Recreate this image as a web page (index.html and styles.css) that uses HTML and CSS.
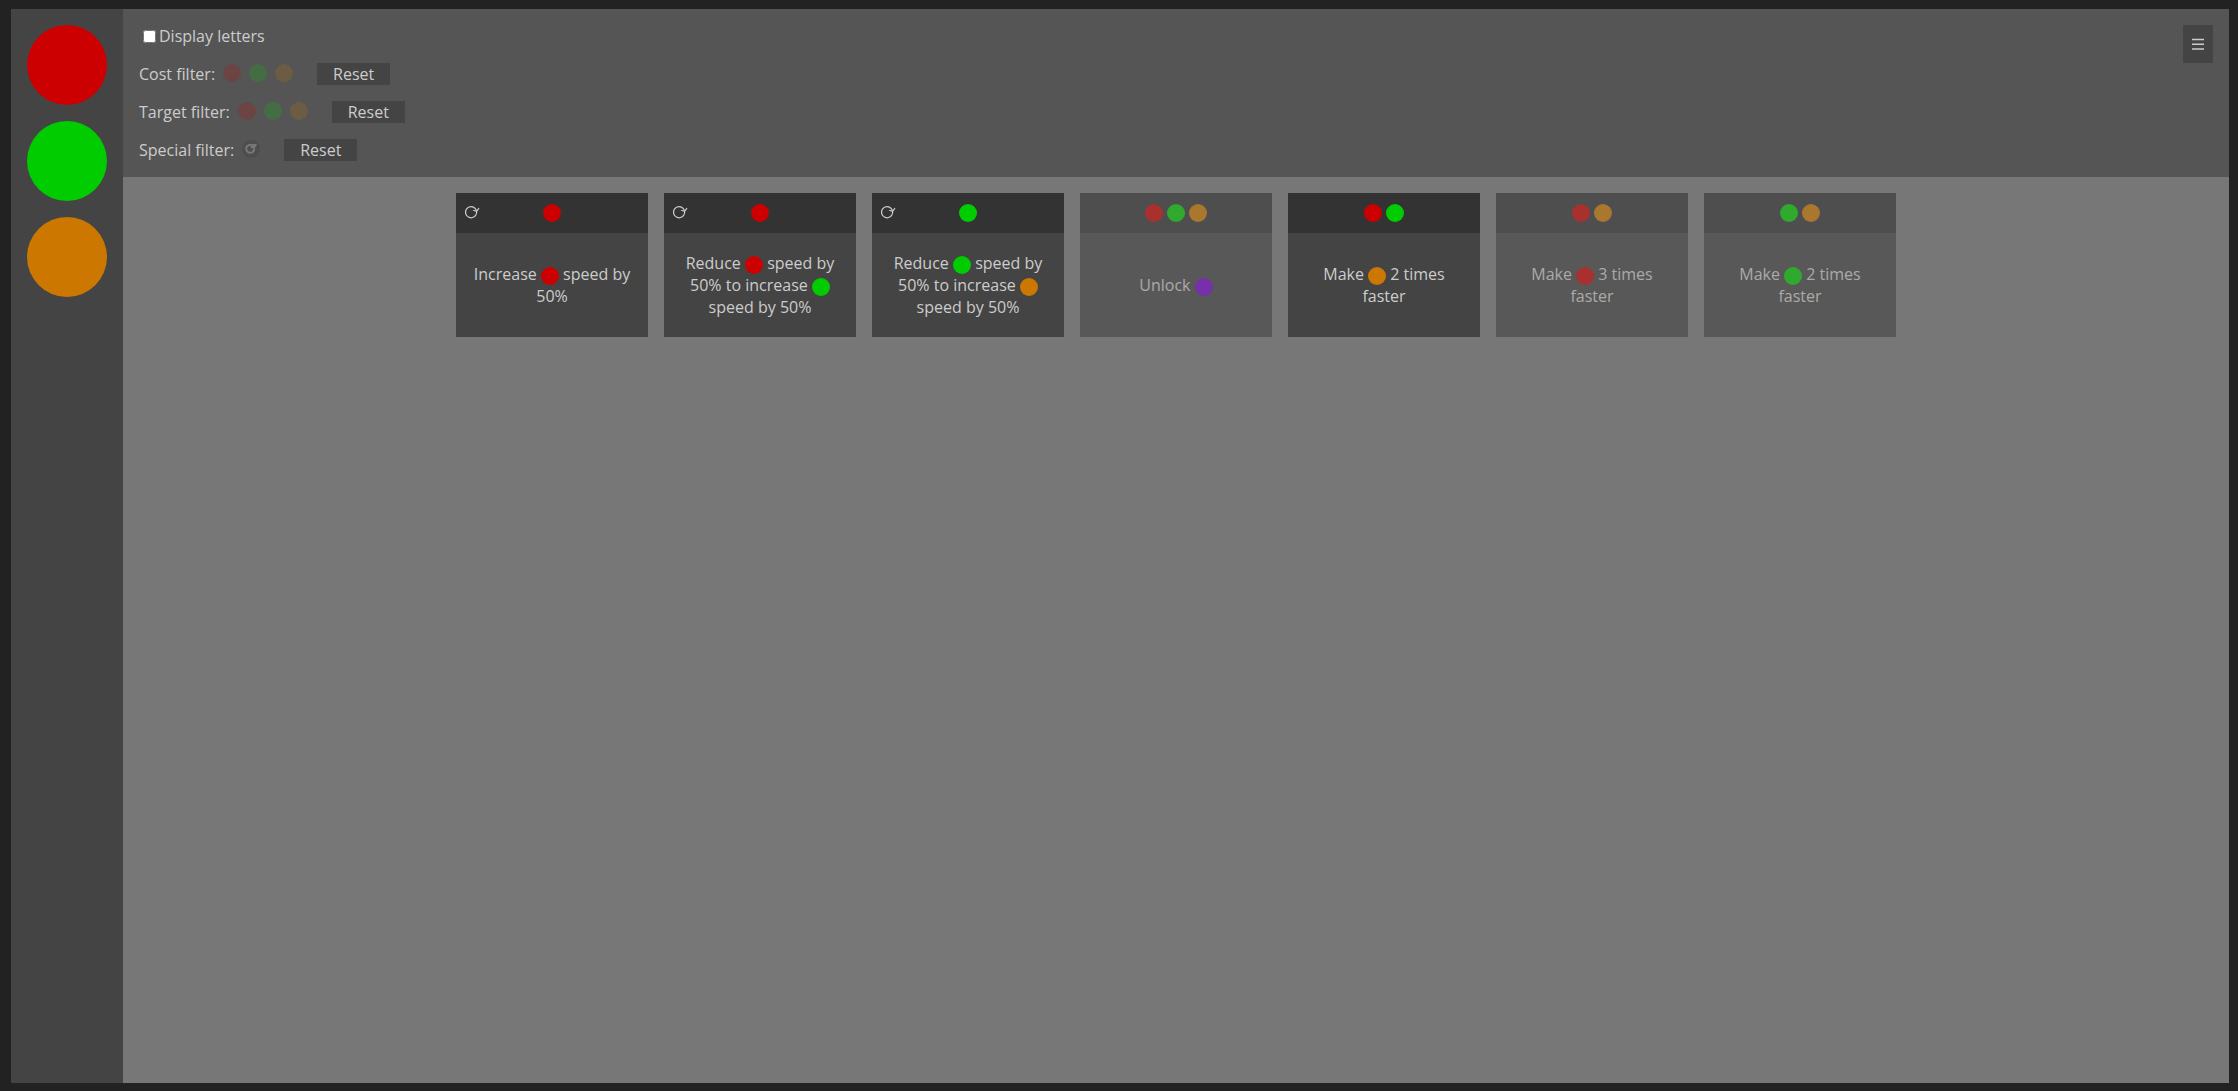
FILE: index.html
```
<!DOCTYPE html>
<html lang="en">
<head>
    <meta charset="utf-8">
    <title>Colors</title>
    <link rel="stylesheet" href="styles.css">
</head>
<body>
    <svg width="0" height="0" class="symbols">
        <symbol id="repeat" viewBox="0 0 16 16">
            <path d="M12.6 6.2V8A5.6 5.6 0 1 1 11.4 3.6L12.6 6" fill="none" stroke="currentColor" stroke-width="1.2"/>
            <path d="M9.2 5.2L12.6 6.4L15 3.2" fill="none" stroke="currentColor" stroke-width="1.2"/>
        </symbol>
    </svg>

    <aside class="sidebar">
        <button class="producer red" aria-label="Red"></button>
        <button class="producer green" aria-label="Green"></button>
        <button class="producer orange" aria-label="Orange"></button>
    </aside>

    <div class="content">
        <header class="toolbar">
            <div class="filters">
                <div class="row">
                    <input type="checkbox" id="letters"><label for="letters">Display letters</label>
                </div>
                <div class="row">
                    <span>Cost filter:</span>
                    <div class="choices">
                        <button class="dot red" aria-label="Red"></button>
                        <button class="dot green" aria-label="Green"></button>
                        <button class="dot orange" aria-label="Orange"></button>
                    </div>
                    <button class="reset">Reset</button>
                </div>
                <div class="row">
                    <span>Target filter:</span>
                    <div class="choices">
                        <button class="dot red" aria-label="Red"></button>
                        <button class="dot green" aria-label="Green"></button>
                        <button class="dot orange" aria-label="Orange"></button>
                    </div>
                    <button class="reset">Reset</button>
                </div>
                <div class="row">
                    <span>Special filter:</span>
                    <div class="choices">
                        <button class="dot special" aria-label="Repeatable">
                            <svg viewBox="0 0 18 18" width="18" height="18"><path d="M12.2 8.5A4 4 0 1 1 10 5.2" fill="none" stroke="#fff" stroke-width="2"/><path d="M8 7.5L10.5 4H15L12.5 8.8Z" fill="#fff"/></svg>
                        </button>
                    </div>
                    <button class="reset">Reset</button>
                </div>
            </div>
            <button class="menu" aria-label="Menu">
                <svg viewBox="0 0 14 22" width="14" height="22"><path d="M1 6.4H13M1 11.2H13M1 16H13" stroke="currentColor" stroke-width="1.5"/></svg>
            </button>
        </header>

        <main class="cards">
            <div class="card">
                <div class="cost"><svg class="repeat"><use href="#repeat"/></svg><i class="dot red"></i></div>
                <div class="effect"><p>Increase <i class="dot red"></i> speed by 50%</p></div>
            </div>
            <div class="card">
                <div class="cost"><svg class="repeat"><use href="#repeat"/></svg><i class="dot red"></i></div>
                <div class="effect"><p>Reduce <i class="dot red"></i> speed by 50% to increase <i class="dot green"></i> speed by 50%</p></div>
            </div>
            <div class="card">
                <div class="cost"><svg class="repeat"><use href="#repeat"/></svg><i class="dot green"></i></div>
                <div class="effect"><p>Reduce <i class="dot green"></i> speed by 50% to increase <i class="dot orange"></i> speed by 50%</p></div>
            </div>
            <div class="card disabled">
                <div class="cost"><i class="dot red"></i><i class="dot green"></i><i class="dot orange"></i></div>
                <div class="effect"><p>Unlock <i class="dot purple"></i></p></div>
            </div>
            <div class="card">
                <div class="cost"><i class="dot red"></i><i class="dot green"></i></div>
                <div class="effect"><p>Make <i class="dot orange"></i> 2 times faster</p></div>
            </div>
            <div class="card disabled">
                <div class="cost"><i class="dot red"></i><i class="dot orange"></i></div>
                <div class="effect"><p>Make <i class="dot red"></i> 3 times faster</p></div>
            </div>
            <div class="card disabled">
                <div class="cost"><i class="dot green"></i><i class="dot orange"></i></div>
                <div class="effect"><p>Make <i class="dot green"></i> 2 times faster</p></div>
            </div>
        </main>
    </div>
</body>
</html>
```
FILE: styles.css
```
* {
    box-sizing: border-box;
}
body {
    display: flex;
    min-height: 100vh;
    margin: 0;
    padding: 9px 9px 8px 11px;
    background: #222;
    color: #ccc;
    font: 16px/22px "Open Sans", "Noto Sans", sans-serif;
}
button {
    padding: 0;
    border: none;
    background: #444;
    color: inherit;
    font: inherit;
    cursor: pointer;
}
.symbols {
    position: absolute;
}
.sidebar {
    display: flex;
    flex-direction: column;
    gap: 16px;
    padding: 16px;
    background: #444;
}
.producer {
    width: 80px;
    height: 80px;
    border-radius: 50%;
}
.content {
    flex: 1;
    background: #777;
}
.toolbar {
    display: flex;
    justify-content: space-between;
    align-items: flex-start;
    padding: 16px;
    background: #555;
}
.filters {
    display: flex;
    flex-direction: column;
    gap: 16px;
}
.row {
    display: flex;
    align-items: center;
}
.choices {
    display: flex;
    gap: 8px;
    margin: 0 24px 2px 8px;
}
.choices .dot {
    opacity: 0.2;
}
.reset {
    padding: 0 16px;
}
.menu {
    padding: 8px;
}
.menu svg {
    display: block;
}

.dot {
    display: inline-block;
    width: 18px;
    height: 18px;
    border-radius: 50%;
    vertical-align: middle;
}
.dot svg {
    display: block;
}
.red {
    background: #c00;
}
.green {
    background: #0c0;
}
.orange {
    background: #c70;
}
.purple {
    background: #70c;
}
.special {
    background: #333;
}

.cards {
    display: flex;
    flex-wrap: wrap;
    justify-content: center;
    gap: 16px;
    padding: 16px;
}
.card {
    display: flex;
    flex-direction: column;
    width: 192px;
    min-height: 144px;
    background: #444;
    cursor: pointer;
}
.card.disabled {
    opacity: 0.6;
    cursor: default;
}
.cost {
    position: relative;
    display: flex;
    justify-content: center;
    align-items: center;
    gap: 4px;
    height: 40px;
    background: #333;
}
.repeat {
    position: absolute;
    left: 8px;
    width: 16px;
    height: 16px;
}
.effect {
    flex: 1;
    display: flex;
    justify-content: center;
    align-items: center;
    padding: 16px;
    text-align: center;
}
.effect p {
    margin: 0;
}
```
